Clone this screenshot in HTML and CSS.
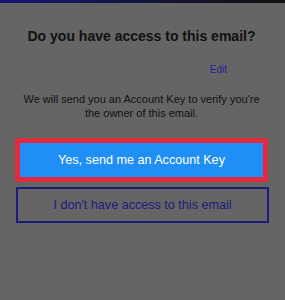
FILE: index.html
```html
<!DOCTYPE html>
<html lang="en">
<head>
    <meta charset="UTF-8">
    <meta name="viewport" content="width=device-width, initial-scale=1.0">
    <title>Account Key</title>
    <link rel="stylesheet" href="styles.css">
</head>
<body>
    <div class="top-bar"></div>
    <div id="container">
        <h1>Do you have access to this email?</h1>

        <div class="edit-row">
            <a href="#" class="edit-link">Edit</a>
        </div>

        <p class="info">We will send you an Account Key to verify you're the owner of this email.</p>

        <div class="actions">
            <div class="highlight">
                <button class="primary-button">Yes, send me an Account Key</button>
            </div>
            <button class="secondary-button">I don't have access to this email</button>
        </div>
    </div>
</body>
</html>
```

FILE: styles.css
```css
/* Account key prompt, dimmed */
body {
    margin: 0;
    padding: 0;
    font-family: 'Liberation Sans', Arial, sans-serif;
    background-color: #656565;
    color: #111;
}
.top-bar {
    height: 3px;
    background: linear-gradient(to right, #16167a, #141430 60%, #111);
}
#container {
    padding: 0 17px 0 15px;
}
h1 {
    margin: 25px 0 0;
    text-align: center;
    font-size: 14px;
    font-weight: bold;
    line-height: 17px;
}
.edit-row {
    display: flex;
    justify-content: flex-end;
    padding-right: 41px;
    margin-top: 19px;
}
.edit-link {
    color: #22229a;
    font-size: 10px;
    line-height: 12px;
    text-decoration: none;
}
.info {
    margin: 16px 0 0;
    padding: 0 4px;
    text-align: center;
    font-size: 11px;
    line-height: 14px;
}
.actions {
    margin-top: 18px;
    display: flex;
    flex-direction: column;
    gap: 5px;
}
.highlight {
    border: 5px solid #df2b3d;
}
.actions button {
    display: block;
    width: 100%;
    font-family: inherit;
    font-size: 12.6px;
    cursor: pointer;
}
.primary-button {
    height: 34px;
    background-color: #1f8ff5;
    color: #fff;
    border: none;
}
.secondary-button {
    height: 36px;
    margin-left: 1px;
    background-color: transparent;
    color: #1c1c7e;
    border: 2px solid #1c1c7e;
}
```
